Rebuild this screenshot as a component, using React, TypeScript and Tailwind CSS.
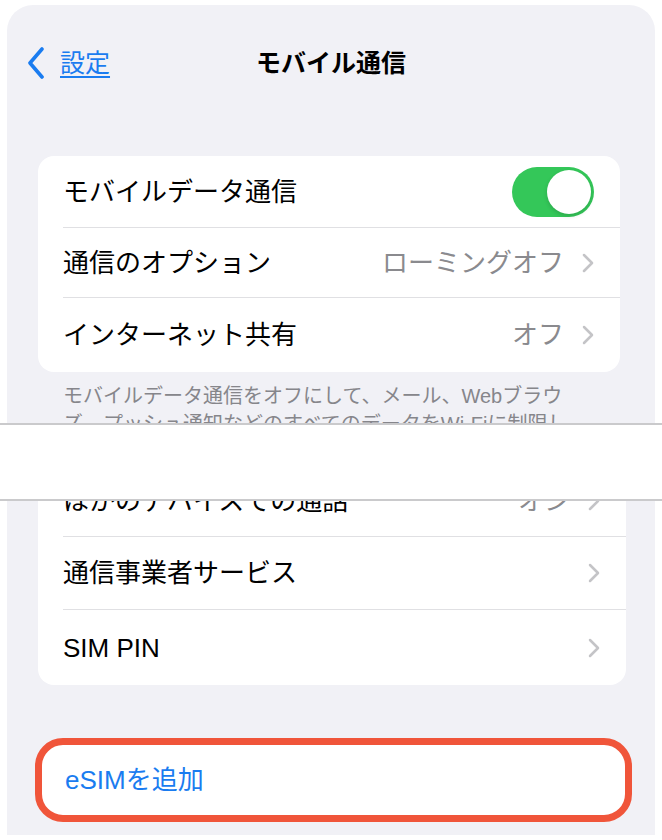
import React from "react";

const font = "font-['Liberation_Sans','Noto_Sans_CJK_JP',sans-serif]";

/* ================= ICONS ================= */

function Chevron() {
  return (
    <svg width="12" height="20" viewBox="0 0 12 20" className="shrink-0">
      <path
        d="M2 2 L10 10 L2 18"
        fill="none"
        stroke="#c4c4c7"
        strokeWidth="2.5"
        strokeLinecap="round"
        strokeLinejoin="round"
      />
    </svg>
  );
}

function BackChevron() {
  return (
    <svg width="20" height="32" viewBox="0 0 20 32" className="shrink-0">
      <path
        d="M16 2 L4 16 L16 30"
        fill="none"
        stroke="#1a7cf0"
        strokeWidth="3.6"
        strokeLinecap="round"
        strokeLinejoin="round"
      />
    </svg>
  );
}

function Toggle() {
  return (
    <div className="flex h-[50px] w-[82px] items-center justify-end rounded-full bg-[#34c759] p-[3px]">
      <div className="h-[44px] w-[44px] rounded-full bg-white shadow-[0_2px_4px_rgba(0,0,0,0.15)]" />
    </div>
  );
}

/* ================= ROW ================= */

type RowProps = {
  label: string;
  value?: string;
  height: string;
  last?: boolean;
  toggle?: boolean;
  chevron?: boolean;
};

function Row({ label, value, height, last, toggle, chevron }: RowProps) {
  return (
    <div className={`flex pl-[25px] ${height}`}>
      <div
        className={`flex flex-1 items-center justify-between pr-[26px] ${
          last ? "" : "border-b border-[#e0e0e3]"
        }`}
      >
        <span className="text-[26px] leading-none text-black">{label}</span>
        <div className="flex items-center gap-[18px]">
          {value && (
            <span className="text-[26px] leading-none text-[#8a8a8e]">
              {value}
            </span>
          )}
          {toggle && <Toggle />}
          {chevron && <Chevron />}
        </div>
      </div>
    </div>
  );
}

export default function App() {
  return (
    <div className={`h-[840px] w-[662px] overflow-hidden bg-white ${font}`}>
      {/* UPPER PART */}
      <div className="mx-[7px] mt-[5px] h-[418px] overflow-hidden rounded-t-[26px] bg-[#f1f1f6]">
        {/* HEADER */}
        <div className="mt-[38px] grid h-[40px] grid-cols-[1fr_auto_1fr] items-center">
          <div className="flex items-center gap-[14px] pl-[19px]">
            <BackChevron />
            <span className="text-[25px] leading-none text-[#1a7cf0] underline underline-offset-[4px]">
              設定
            </span>
          </div>
          <h1 className="text-[25px] font-bold leading-none text-black">
            モバイル通信
          </h1>
          <div />
        </div>

        {/* CARD */}
        <div className="ml-[31px] mr-[35px] mt-[73px] overflow-hidden rounded-[16px] bg-white">
          <Row label="モバイルデータ通信" height="h-[72px]" toggle />
          <Row
            label="通信のオプション"
            value="ローミングオフ"
            height="h-[70px]"
            chevron
          />
          <Row
            label="インターネット共有"
            value="オフ"
            height="h-[74px]"
            chevron
            last
          />
        </div>

        {/* FOOTER NOTE */}
        <div className="mt-[10px] pl-[56px] text-[20px] leading-[28px] text-[#86868b]">
          <p className="whitespace-nowrap">
            モバイルデータ通信をオフにして、メール、Webブラウ
          </p>
          <p className="whitespace-nowrap">
            ズ、プッシュ通知などのすべてのデータをWi-Fiに制限し
          </p>
        </div>
      </div>

      {/* TEAR */}
      <div className="h-[2px] bg-[#cacacc]" />
      <div className="h-[74px] bg-white" />
      <div className="h-[2px] bg-[#cacacc]" />

      {/* LOWER PART */}
      <div className="mx-[7px] h-[334px] overflow-hidden bg-[#f1f1f6]">
        <div className="-mt-[36px] ml-[31px] mr-[29px] overflow-hidden rounded-b-[16px] bg-white">
          <Row
            label="ほかのデバイスでの通話"
            value="オン"
            height="h-[72px]"
            chevron
          />
          <Row label="通信事業者サービス" height="h-[73px]" chevron />
          <Row label="SIM PIN" height="h-[75px]" chevron last />
        </div>

        {/* ADD ESIM */}
        <div className="ml-[28px] mr-[23px] mt-[53px] flex h-[84px] items-center rounded-[28px] border-[7px] border-[#f0553a] bg-white pl-[23px]">
          <span className="text-[26px] leading-none text-[#1a7cf0]">
            eSIMを追加
          </span>
        </div>
      </div>
    </div>
  );
}
